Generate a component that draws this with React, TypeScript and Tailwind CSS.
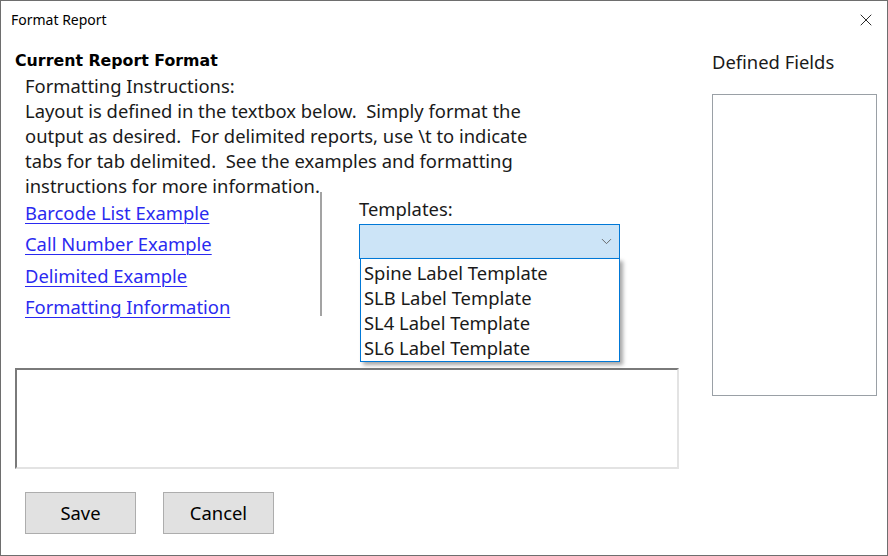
import { X, ChevronDown } from "lucide-react";

const links = [
  "Barcode List Example",
  "Call Number Example",
  "Delimited Example",
  "Formatting Information",
];

const templates = [
  "Spine Label Template",
  "SLB Label Template",
  "SL4 Label Template",
  "SL6 Label Template",
];

const ui = { fontFamily: '"Noto Sans", "Open Sans", sans-serif' };

export default function App() {
  return (
    <div
      className="flex h-[556px] w-[888px] flex-col border border-[#6e6e6e] bg-white text-[#1a1a1a]"
      style={ui}
    >
      {/* title bar */}
      <div className="flex h-[38px] shrink-0 items-center justify-between pl-[10px] pr-[11px]">
        <span className="-mt-[1px] text-[14px] text-black">Format Report</span>
        <X className="-mt-[1px] size-[20px] text-black" strokeWidth={1} />
      </div>

      <div className="flex flex-1">
        {/* left column */}
        <div className="flex w-[697px] shrink-0 flex-col pl-[14px]">
          <div
            className="mt-[12px] h-[20px] text-[15.8px] font-bold leading-[20px] text-black"
            style={{ fontFamily: '"DejaVu Sans", Verdana, sans-serif' }}
          >
            Current Report Format
          </div>
          <div className="mt-[2px] pl-[10px] text-[18.4px] leading-[25px]">
            <div>Formatting Instructions:</div>
            <div>Layout is defined in the textbox below.&nbsp; Simply format the</div>
            <div>output as desired.&nbsp; For delimited reports, use \t to indicate</div>
            <div>tabs for tab delimited.&nbsp; See the examples and formatting</div>
            <div>instructions for more information.</div>
          </div>

          <div className="-mt-[6px] flex">
            <div className="flex w-[305px] flex-col pl-[10px] pt-[5px]">
              {links.map((l) => (
                <a
                  key={l}
                  href="#"
                  className="h-[31.3px] text-[18.4px] leading-[31px] text-[#2a2af0] underline decoration-1 underline-offset-[3px]"
                >
                  {l}
                </a>
              ))}
            </div>
            <div className="h-[124px] w-[2px] bg-[#a3a3a3]" />
            <div className="relative ml-[37px] flex flex-col pt-[4px]">
              <div className="h-[28px] text-[18.4px] leading-[25px]">Templates:</div>
              <div className="flex h-[35px] w-[261px] items-center justify-end border border-[#0078d7] bg-[#cce4f7] pr-[4px]">
                <ChevronDown className="size-[17px] text-[#606060]" strokeWidth={1.3} />
              </div>
              <div className="absolute left-[1px] top-[66px] z-10 flex w-[260px] flex-col border border-[#0078d7] bg-white pb-[1px] pl-[3px] pt-[1px] shadow-[3px_3px_4px_rgba(0,0,0,0.35)]">
                {templates.map((t) => (
                  <div key={t} className="h-[25px] text-[18.4px] leading-[25px]">
                    {t}
                  </div>
                ))}
              </div>
            </div>
          </div>

          <textarea className="mt-[46px] h-[101px] w-[664px] resize-none border-2 border-b-[#e3e3e3] border-l-[#7a7a7a] border-r-[#e3e3e3] border-t-[#7a7a7a] bg-white outline-none" />

          <div className="mt-[23px] flex gap-[27px] pl-[10px]">
            <button className="h-[42px] w-[111px] border border-[#adadad] bg-[#e1e1e1] text-[18.4px] text-black">
              Save
            </button>
            <button className="h-[42px] w-[111px] border border-[#adadad] bg-[#e1e1e1] text-[18.4px] text-black">
              Cancel
            </button>
          </div>
        </div>

        {/* right column */}
        <div className="flex flex-col pl-[14px]">
          <div className="mt-[10px] h-[25px] text-[18.4px] leading-[25px]">Defined Fields</div>
          <div className="mt-[20px] h-[302px] w-[165px] border border-[#9aa0a6] bg-white" />
        </div>
      </div>
    </div>
  );
}
